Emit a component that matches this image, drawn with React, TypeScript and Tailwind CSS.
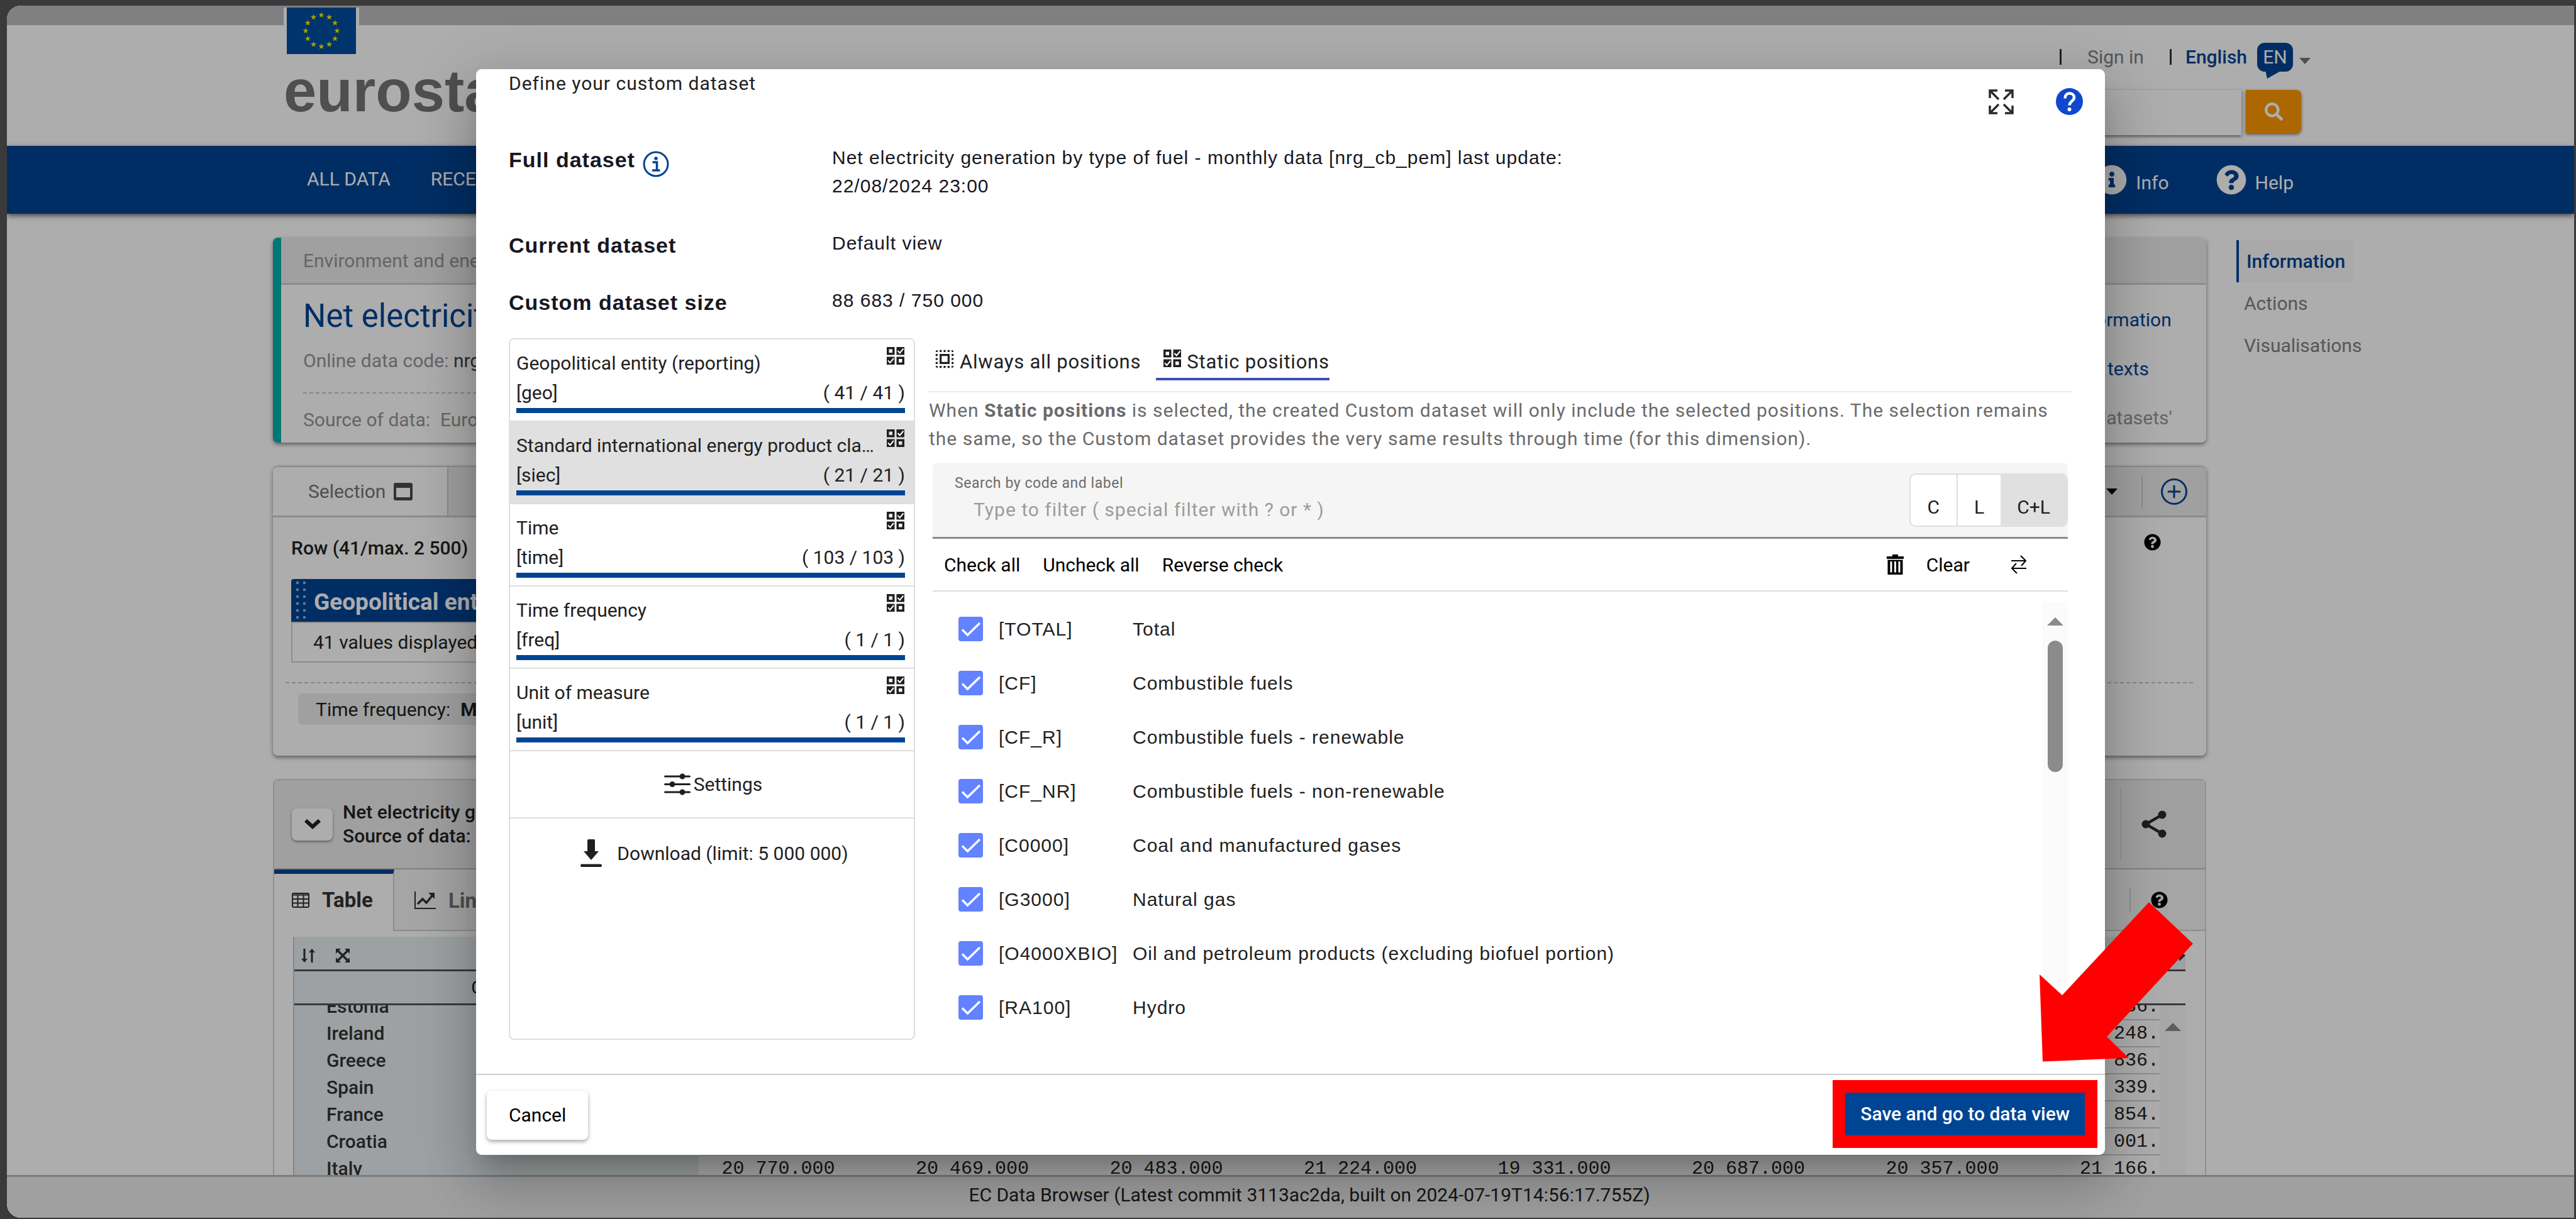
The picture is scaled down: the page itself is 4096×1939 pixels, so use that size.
import React from "react";
import { FaSearch, FaQuestionCircle, FaInfoCircle } from "react-icons/fa";
import { MdSelectAll } from "react-icons/md";

type Dimension = { label: string; code: string; count: string; selected?: boolean };

const dimensions: Dimension[] = [
  { label: "Geopolitical entity (reporting)", code: "[geo]", count: "( 41 / 41 )" },
  { label: "Standard international energy product classification (SIEC)", code: "[siec]", count: "( 21 / 21 )", selected: true },
  { label: "Time", code: "[time]", count: "( 103 / 103 )" },
  { label: "Time frequency", code: "[freq]", count: "( 1 / 1 )" },
  { label: "Unit of measure", code: "[unit]", count: "( 1 / 1 )" },
];

const positions = [
  ["[TOTAL]", "Total"],
  ["[CF]", "Combustible fuels"],
  ["[CF_R]", "Combustible fuels - renewable"],
  ["[CF_NR]", "Combustible fuels - non-renewable"],
  ["[C0000]", "Coal and manufactured gases"],
  ["[G3000]", "Natural gas"],
  ["[O4000XBIO]", "Oil and petroleum products (excluding biofuel portion)"],
  ["[RA100]", "Hydro"],
];

const tableRows: { name: string; values: string[] }[] = [
  { name: "Estonia", values: ["", "", "", "", "", "", "", "436.400"] },
  { name: "Ireland", values: ["", "", "", "", "", "", "", "2 248.100"] },
  { name: "Greece", values: ["", "", "", "", "", "", "", "3 836.100"] },
  { name: "Spain", values: ["", "", "", "", "", "", "", "20 339.100"] },
  { name: "France", values: ["", "", "", "", "", "", "", "42 854.400"] },
  { name: "Croatia", values: ["", "", "", "", "", "", "", "1 001.100"] },
  {
    name: "Italy",
    values: ["20 770.000", "20 469.000", "20 483.000", "21 224.000", "19 331.000", "20 687.000", "20 357.000", "21 166.000"],
  },
];

function CheckGridIcon({ className }: { className: string }) {
  return (
    <svg viewBox="0 0 28 28" className={className} aria-hidden="true">
      <path fillRule="evenodd" fill="#1f1f1f" d="M0 0h12.500v12.500H0zM3.500 3.500v5.500h5.500V3.500z" />
      <path fill="#1f1f1f" d="M15.500 0H28v12.500H15.500z" />
      <path fill="none" stroke="#fff" strokeWidth="2" d="M17.500 6l3.300 3.500 5.700-7" />
      <path fill="#1f1f1f" d="M0 15.500h12.500V28H0z" />
      <path fill="none" stroke="#fff" strokeWidth="2" d="M2 21.500l3.300 3.500 5.700-7" />
      <path fillRule="evenodd" fill="#1f1f1f" d="M15.500 15.500H28V28H15.500zM19 19v5.500h5.500V19z" />
    </svg>
  );
}

function EuropeFlag() {
  const stars = Array.from({ length: 12 }, (_, i) => {
    const a = (i * Math.PI) / 6;
    return { x: 55 + 25 * Math.sin(a), y: 37 - 25 * Math.cos(a) };
  });
  return (
    <svg viewBox="0 0 110 74" className="h-[74px] w-[110px]" aria-label="European Union flag">
      <rect width="110" height="74" fill="#004d9f" />
      {stars.map((s, i) => (
        <path
          key={i}
          transform={`translate(${s.x} ${s.y}) scale(5)`}
          fill="#fff000"
          d="M0-1l.225.690h.726l-.587.427.224.691L0 .382l-.588.426.224-.691-.587-.427h.726z"
        />
      ))}
    </svg>
  );
}

function SiteHeader() {
  return (
    <>
      <div className="h-[31px] bg-[#bdbdc0]" />
      <header className="flex h-48 justify-between bg-white pr-[419px] pl-[440px]">
        <div className="-mt-7">
          <div className="w-[120px] bg-white px-[5px]">
            <EuropeFlag />
          </div>
          <div className="mt-3 font-['Liberation_Sans',sans-serif] text-[94px] leading-none font-bold text-[#757575]">eurostat</div>
        </div>
        <div className="flex flex-col items-end pt-7">
          <div className="flex h-[45px] items-center leading-[45px]">
            <span className="h-[25px] w-[3px] bg-[#333]" />
            <a href="#signin" className="mx-[41px] text-[#808080]">Sign in</a>
            <span className="h-[25px] w-[3px] bg-[#333]" />
            <a href="#language" className="ml-[22px] flex items-center font-medium text-[#004494]">
              English
              <span className="relative ml-4 flex h-[46px] w-[57px] items-center justify-center rounded-[12px] bg-[#004494] text-[30px] font-normal text-white">
                EN
                <svg viewBox="0 0 26 14" className="absolute top-[44px] left-[13px] h-[14px] w-[26px]" aria-hidden="true">
                  <path fill="#004494" d="M0 0h26L3 13z" />
                </svg>
              </span>
            </a>
            <svg viewBox="0 0 18 10" className="mt-3 ml-[10px] h-[10px] w-[18px]" aria-hidden="true">
              <path fill="#757575" d="M0 0h18l-9 10z" />
            </svg>
          </div>
          <div className="mt-[30px] mr-[15px] flex gap-[7px]">
            <input aria-label="Search" className="h-[72px] w-[800px] bg-white shadow-[0_2px_5px_rgba(0,0,0,0.55)]" />
            <button aria-label="Search" className="flex h-[69px] w-[88px] items-center justify-center rounded-r-[8px] bg-[#ff9800] text-white shadow-[0_2px_5px_rgba(0,0,0,0.5)]">
              <FaSearch className="size-[29px]" />
            </button>
          </div>
        </div>
      </header>
      <nav className="relative flex h-[108px] items-center justify-between bg-[#004494] pr-[446px] pl-[477px] text-white shadow-[0_3px_8px_rgba(0,0,0,0.6)]">
        <div className="flex gap-16 pb-1">
          <a href="#all">ALL DATA</a>
          <a href="#recent">RECENT DATA</a>
        </div>
        <div className="flex gap-[75px]">
          <a href="#info" className="flex items-center gap-[14px]">
            <FaInfoCircle className="size-[48px]" />
            <span className="pt-2">Info</span>
          </a>
          <a href="#help" className="flex items-center gap-[14px]">
            <FaQuestionCircle className="size-[48px]" />
            <span className="pt-2">Help</span>
          </a>
        </div>
      </nav>
    </>
  );
}

function DatasetCard() {
  return (
    <section className="h-[326px] overflow-hidden rounded-[8px] border-l-[13px] border-[#00b0a9] bg-white leading-[45px] text-[#959595] shadow-[0_3px_6px_rgba(0,0,0,0.45)]">
      <div className="flex h-[75px] items-center border-b-3 border-[#cfcfcf] bg-[#ececec] px-[35px]">Environment and energy</div>
      <div className="flex justify-between pl-[35px]">
        <div className="w-[2400px] pt-5">
          <h1 className="text-[51px] leading-[60px] text-[#004494]">Net electricity generation by type of fuel - monthly data</h1>
          <p className="mt-[18px]">
            Online data code: <span className="text-[#444]">nrg_cb_pem</span>
          </p>
          <div className="mt-7 border-t-2 border-dashed border-[#c4c4c4]" />
          <p className="mt-[19px] flex gap-4">
            Source of data: <span>Eurostat</span>
          </p>
        </div>
        <div className="flex w-[321px] flex-col gap-[33px] pt-[33px]">
          <a href="#dataset" className="text-[#004494]">Dataset information</a>
          <a href="#texts" className="text-[#004494]">Explanatory texts</a>
          <span>Download 'datasets'</span>
        </div>
      </div>
    </section>
  );
}

function SelectionCard() {
  return (
    <section className="h-[461px] overflow-hidden rounded-[8px] border-t-2 border-[#cfcfcf] bg-white shadow-[0_3px_6px_rgba(0,0,0,0.45)]">
      <div className="flex h-20 items-center justify-between border-b-3 border-[#cfcfcf] bg-[#ececec]">
        <button className="flex h-full w-[279px] items-center gap-[13px] border-r-2 border-[#cfcfcf] bg-white pl-[56px] text-[#757575]">
          Selection
          <svg viewBox="0 0 30 28" className="h-[28px] w-[30px]" aria-hidden="true">
            <path fill="#4a4a4a" fillRule="evenodd" d="M3 0h24a3 3 0 013 3v22a3 3 0 01-3 3H3a3 3 0 01-3-3V3a3 3 0 013-3zM4 8v15h22V8z" />
          </svg>
        </button>
        <div className="flex h-full items-center pr-[30px]">
          <svg viewBox="0 0 18 10" className="h-[10px] w-[18px]" aria-hidden="true">
            <path d="M0 0h18l-9 10z" />
          </svg>
          <span className="mr-[29px] ml-[38px] h-[52px] w-[2px] bg-[#cfcfcf]" />
          <svg viewBox="0 0 42 42" className="size-[42px]" fill="none" stroke="#004494" strokeWidth="3" strokeLinecap="round" aria-hidden="true">
            <circle cx="21" cy="21" r="19.500" />
            <path d="M21 12v18M12 21h18" />
          </svg>
        </div>
      </div>
      <div className="flex h-[77px] items-start justify-between pt-[26px] pr-[72px] pl-[29px]">
        <span className="font-medium">Row (41/max. 2 500)</span>
        <FaQuestionCircle className="size-[27px] text-black" />
      </div>
      <div className="mt-[21px] ml-[29px] w-[900px]">
        <div className="flex h-[68px] items-center rounded-t-[4px] bg-[#004494] pl-2 text-[37px] font-bold text-white">
          <svg viewBox="0 0 16 60" className="mr-3 h-[60px] w-[16px]" fill="#8fb0d8" aria-hidden="true">
            {[0, 1, 2, 3, 4, 5].map((r) => (
              <path key={r} d={`M0 ${r * 11}h4v4h-4zM11 ${r * 11}h4v4h-4z`} />
            ))}
          </svg>
          <span className="pt-1">Geopolitical entity (reporting)</span>
        </div>
        <div className="flex h-[65px] items-center border-2 border-[#cfcfcf] pl-[33px]">41 values displayed</div>
      </div>
      <div className="mt-[31px] mr-[21px] ml-5 border-t-2 border-dashed border-[#c4c4c4]" />
      <div className="mt-4 ml-10 flex h-[50px] w-[420px] items-center gap-4 rounded-[6px] bg-[#ececec] pl-7">
        Time frequency: <b>Monthly</b>
      </div>
    </section>
  );
}

function TableCard() {
  return (
    <section className="flex min-h-0 flex-1 flex-col rounded-t-[8px] border-2 border-b-0 border-[#d4d4d4] bg-white">
      <div className="flex h-[142px] shrink-0 items-center justify-between border-b-2 border-[#bdbdbd] bg-[#ececec] pr-[61px] pl-7">
        <div className="flex items-center gap-4">
          <button aria-label="Collapse" className="flex h-[51px] w-[65px] items-center justify-center rounded-[8px] bg-white shadow-[0_2px_4px_rgba(0,0,0,0.4)]">
            <svg viewBox="0 0 26 16" className="h-[16px] w-[26px]" fill="none" stroke="#222" strokeWidth="6" aria-hidden="true">
              <path d="M2 2l11 10L24 2" />
            </svg>
          </button>
          <p className="leading-[38px] font-medium">
            Net electricity generation by type of fuel
            <br />
            Source of data: Eurostat
          </p>
        </div>
        <div className="flex items-center">
          <span className="mr-8 h-[112px] w-[2px] bg-[#d9d9d9]" />
          <svg viewBox="0 0 40 44" className="h-[44px] w-[40px]" fill="#2b2b2b" aria-hidden="true">
            <path fill="none" stroke="#2b2b2b" strokeWidth="4.500" d="M33 7L7 22l26 15" />
            <circle cx="7" cy="22" r="6.500" />
            <circle cx="33" cy="7" r="6.500" />
            <circle cx="33" cy="37" r="6.500" />
          </svg>
        </div>
      </div>
      <div className="flex h-[98px] shrink-0 items-stretch bg-[#f3f3f3]">
        <button className="flex w-[191px] items-center gap-5 border-t-7 border-r-2 border-t-[#004494] border-r-[#cfcfcf] bg-white pb-2 pl-[28px] text-[33px] font-bold text-[#333]">
          <svg viewBox="0 0 28 24" className="h-[24px] w-[28px]" fill="none" stroke="#333" strokeWidth="2" aria-hidden="true">
            <rect x="1" y="1" width="26" height="22" rx="2" />
            <path d="M1 3.500h26M1 10h26M1 16.500h26M9.500 3v20M18.500 3v20" />
          </svg>
          Table
        </button>
        <div className="flex flex-1 items-center justify-between border-b-2 border-[#cfcfcf] pr-[59px] pl-8">
          <button className="flex items-center gap-5 pt-[2px] text-[33px] font-bold text-[#757575]">
            <svg viewBox="0 0 34 28" className="h-[28px] w-[34px]" fill="none" stroke="#333" aria-hidden="true">
              <path strokeWidth="2" d="M1 0v27h33" />
              <path strokeWidth="3.500" d="M5 20l8-8 6 6L28 7" />
              <path fill="#333" stroke="none" d="M22 2h10v10z" />
            </svg>
            Line
          </button>
          <div className="flex items-center">
            <span className="mr-8 h-[38px] w-[2px] bg-[#cfcfcf]" />
            <FaQuestionCircle className="size-[27px] text-black" />
          </div>
        </div>
      </div>
      <div className="mt-[9px] mr-[31px] ml-[30px] flex min-h-0 flex-1 flex-col border-l-2 border-[#c4c4c4]">
        <div className="flex h-[55px] shrink-0 items-center justify-between border-b-3 border-[#555] bg-[#e8eef0] pt-[7px] pl-[11px]">
          <div className="flex items-center gap-[33px]">
            <svg viewBox="0 0 22 22" className="size-[22px]" fill="#333" aria-hidden="true">
              <path d="M3.500 0h3v16H10l-5 6-5-6h3.500zM15.500 22h3V6H22l-5-6-5 6h3.500z" />
            </svg>
            <svg viewBox="0 0 22 22" className="size-[22px]" fill="#333" aria-hidden="true">
              <path d="M0 0h8L0 8zM22 0v8l-8-8zM0 22v-8l8 8zM22 22h-8l8-8z" />
              <path fill="none" stroke="#333" strokeWidth="3.500" d="M3 3l16 16M19 3L3 19" />
            </svg>
          </div>
          <svg viewBox="0 0 22 22" className="size-[22px]" fill="#333" aria-hidden="true">
            <path d="M0 8h12V2l10 9-10 9v-6H0z" />
          </svg>
        </div>
        <div className="flex h-[54px] shrink-0 border-b-3 border-[#555] bg-white">
          <div className="flex w-[643px] items-center bg-[#e8eef0] pl-[281px]">GEO (Labels)</div>
        </div>
        <div className="flex min-h-0 flex-1">
          <div className="min-w-0 flex-1 overflow-hidden">
            <table className="-mt-5 w-[3111px] table-fixed border-collapse">
              <tbody>
                {tableRows.map((row) => (
                  <tr key={row.name} className="h-[43px]">
                    <th scope="row" className="w-[643px] bg-[#e8eef0] p-0 pl-[51px] text-left leading-[42px] font-medium text-[#333]">
                      {row.name}
                    </th>
                    {row.values.map((v, i) => (
                      <td
                        key={i}
                        className="border-b-2 border-[#cfcfcf] p-0 pt-[2px] pr-[92px] text-right font-['Liberation_Mono',monospace] leading-[39px] whitespace-nowrap text-[#222]"
                      >
                        {v}
                      </td>
                    ))}
                  </tr>
                ))}
              </tbody>
            </table>
          </div>
          <div className="flex w-[41px] justify-center bg-[#f8f8f8] pt-[28px]">
            <svg viewBox="0 0 26 13" className="h-[13px] w-[26px]" aria-hidden="true">
              <path fill="#8b8b8b" d="M0 13L13 0l13 13z" />
            </svg>
          </div>
        </div>
      </div>
    </section>
  );
}

function DimensionList() {
  return (
    <div className="w-[646px] shrink-0 overflow-hidden rounded-[8px] border-2 border-[#dedede]">
      {dimensions.map((d) => (
        <button
          key={d.code}
          className={
            d.selected
              ? "relative block w-full border-b-2 border-[#dedede] bg-[#e0e0e0] pt-[14px] pr-[14px] pb-3 pl-[10px] text-left leading-[47px]"
              : "relative block w-full border-b-2 border-[#dedede] bg-white pt-[14px] pr-[14px] pb-3 pl-[10px] text-left leading-[47px]"
          }
        >
          <span className="block truncate pr-10">{d.label}</span>
          <span className="flex justify-between">
            <span>{d.code}</span>
            <span>{d.count}</span>
          </span>
          <span className="mt-px block h-2 bg-[#004494]" />
          <CheckGridIcon className="absolute top-3 right-[15px] size-[28px]" />
        </button>
      ))}
      <button className="flex h-[107px] w-full items-center justify-center gap-[5px] border-b-2 border-[#dedede] pl-1">
        <svg viewBox="0 0 42 35" className="h-[35px] w-[42px]" stroke="#1f1f1f" strokeWidth="3" strokeLinecap="round" fill="#1f1f1f" aria-hidden="true">
          <path d="M1.500 5h39M1.500 17.500h39M1.500 30h39" />
          <circle cx="29" cy="5" r="3" />
          <circle cx="13" cy="17.500" r="3" />
          <circle cx="29" cy="30" r="3" />
        </svg>
        Settings
      </button>
      <button className="flex h-[110px] w-full items-center justify-center gap-6 pl-2">
        <svg viewBox="0 0 34 44" className="h-[44px] w-[34px]" fill="#1f1f1f" aria-hidden="true">
          <path d="M13 0h8a2 2 0 012 2v17h6L17 33 5 19h6V2a2 2 0 012-2z" />
          <rect y="39.500" width="34" height="4.500" rx="2" />
        </svg>
        Download (limit: 5 000 000)
      </button>
    </div>
  );
}

function PositionsPane() {
  return (
    <div className="flex min-w-0 flex-1 flex-col">
      <div className="flex gap-6 border-b-2 border-[#ebebeb] pb-[17px] pl-[10px] text-[31px] leading-[45px] tracking-wide" role="tablist">
        <button role="tab" className="flex gap-[9px] border-b-4 border-transparent pt-[15px] pb-[3px]">
          <MdSelectAll className="-mx-[4px] -mt-px size-[38px] text-[#1f1f1f]" />
          Always all positions
        </button>
        <button role="tab" aria-selected="true" className="flex gap-[9px] border-b-4 border-[#3f51b5] pt-[15px] pb-[3px] pl-3">
          <CheckGridIcon className="mt-[3px] size-[28px]" />
          Static positions
        </button>
      </div>
      <p className="mt-[6px] leading-[45px] tracking-[1px] text-[#6b6b6b]">
        When <b>Static positions</b> is selected, the created Custom dataset will only include the selected positions. The selection remains the same, so
        the Custom dataset provides the very same results through time (for this dimension).
      </p>
      <div className="mr-[7px] ml-[6px] flex min-h-0 flex-1 flex-col">
        <div className="mt-4 flex h-[121px] items-start justify-between rounded-t-[8px] border-b-3 border-[#8a8a8a] bg-[#f5f5f5]">
          <div className="flex flex-1 flex-col pt-[19px]">
            <label htmlFor="filter" className="pl-[35px] text-[23px] leading-7 tracking-wide text-[#6b6b6b]">
              Search by code and label
            </label>
            <input
              id="filter"
              placeholder="Type to filter ( special filter with ? or * )"
              className="mt-[5px] h-[45px] bg-transparent pl-[65px] tracking-[1px] outline-none placeholder:text-[#9c9c9c]"
            />
          </div>
          <div className="mt-[17px] flex h-[85px] overflow-hidden rounded-[10px] border-2 border-[#dedede] bg-white">
            <button className="border-r-2 border-[#dedede] px-[27px] pt-[22px]">C</button>
            <button className="px-[26px] pt-[22px]">L</button>
            <button className="bg-[#e0e0e0] px-[26px] pt-[22px]">C+L</button>
          </div>
        </div>
        <div className="flex h-[84px] items-center border-b-2 border-[#dedede] pr-[66px] pl-[18px] text-black">
          <div className="flex flex-1 gap-9">
            <button>Check all</button>
            <button>Uncheck all</button>
            <button>Reverse check</button>
          </div>
          <button className="flex items-center gap-9">
            <svg viewBox="0 0 27 32" className="h-[32px] w-[27px]" aria-hidden="true">
              <path fillRule="evenodd" d="M9 0h9v3h9v4H0V3h9zM1.500 8.500h24V32h-24zM5.500 11v17.500h3V11zM12 11v17.500h3V11zM18.500 11v17.500h3V11z" />
            </svg>
            Clear
          </button>
          <button aria-label="Swap selection" className="ml-[66px]">
            <svg viewBox="0 0 24 30" className="h-[30px] w-[24px]" fill="none" stroke="#000" strokeWidth="2" aria-hidden="true">
              <path d="M0 9h23M15 1l8 8-7 8M24 21H1M9 29l-8-8 7-8" />
            </svg>
          </button>
        </div>
        <div className="mt-4 flex min-h-0 flex-1">
          <ul className="flex flex-1 flex-col justify-between pb-2 font-['Liberation_Sans',sans-serif] tracking-[1px]">
            {positions.map(([code, label]) => (
              <li key={code}>
                <label className="flex h-[86px] items-center pl-[41px]">
                  <span className="relative mr-[25px] size-[39px] shrink-0">
                    <input type="checkbox" defaultChecked className="block size-[39px] appearance-none rounded-[4px] bg-[#6282ff]" />
                    <svg viewBox="0 0 39 39" className="pointer-events-none absolute inset-0 size-[39px]" fill="none" stroke="#fff" strokeWidth="3.500" aria-hidden="true">
                      <path d="M6 20.500l8.500 8.500L34 10" />
                    </svg>
                  </span>
                  <span className="w-[213px] shrink-0">{code}</span>
                  <span>{label}</span>
                </label>
              </li>
            ))}
          </ul>
          <div className="flex w-10 flex-col items-center bg-[#fbfbfb] pt-[25px]">
            <svg viewBox="0 0 26 13" className="h-[13px] w-[26px]" aria-hidden="true">
              <path fill="#8b8b8b" d="M0 13L13 0l13 13z" />
            </svg>
            <div className="mt-6 h-[209px] w-6 rounded-full bg-[#8b8b8b]" />
          </div>
        </div>
      </div>
    </div>
  );
}

function CustomDatasetDialog() {
  return (
    <div
      role="dialog"
      aria-label="Define your custom dataset"
      className="relative flex h-full w-full max-w-[2590px] flex-col rounded-[9px] bg-white text-[#212121] shadow-[0_23px_32px_-15px_rgba(0,0,0,0.2),0_50px_80px_6px_rgba(0,0,0,0.14),0_19px_97px_17px_rgba(0,0,0,0.12)]"
    >
      <div className="flex min-h-0 flex-1 flex-col px-[52px] pb-[54px]">
        <div className="flex items-start justify-between">
          <h2 className="leading-[46px] tracking-[1px]">Define your custom dataset</h2>
          <div className="-mr-[17px] flex items-center gap-[67px] pt-[30px]">
            <button aria-label="Full screen">
              <svg viewBox="0 0 40 40" className="size-[40px]" fill="none" stroke="#2b2b2b" strokeWidth="3.500" aria-hidden="true">
                <path d="M2 14V2h12M2 2l14 14M26 2h12v12M38 2L24 16M2 26v12h12M2 38l14-14M38 26v12H26M38 38L24 24" />
              </svg>
            </button>
            <button aria-label="Help">
              <svg viewBox="0 0 43 43" className="size-[43px]" fill="none" aria-hidden="true">
                <circle cx="21.500" cy="21.500" r="21.500" fill="#1047cf" />
                <path stroke="#fff" strokeWidth="4.500" d="M14.500 16.500c0-5 3-8 7.200-8s7.300 2.700 7.300 6.700c0 5.300-7.500 6.300-7.500 12.300" />
                <circle cx="21.500" cy="34" r="3" fill="#fff" />
              </svg>
            </button>
          </div>
        </div>
        <dl className="mt-[45px] grid grid-cols-[514px_1200px] gap-y-[46px] font-['Liberation_Sans',sans-serif] leading-[45px] tracking-[1px] text-[#17171f]">
          <dt className="-mb-1 flex items-start gap-3 pt-1 text-[34px] font-bold">
            Full dataset
            <svg viewBox="0 0 42 42" className="mt-2 size-[42px]" fill="none" stroke="#004494" aria-hidden="true">
              <circle cx="21" cy="21" r="19" strokeWidth="3" />
              <path strokeWidth="3.500" d="M15.500 18h7v12.500M15 31h12.500" />
              <circle cx="21" cy="12" r="2.800" fill="#004494" stroke="none" />
            </svg>
          </dt>
          <dd>
            Net electricity generation by type of fuel - monthly data [nrg_cb_pem] last update:
            <br />
            22/08/2024 23:00
          </dd>
          <dt className="-mb-1 pt-1 text-[34px] font-bold">Current dataset</dt>
          <dd>Default view</dd>
          <dt className="-mb-1 pt-1 text-[34px] font-bold">Custom dataset size</dt>
          <dd>88 683 / 750 000</dd>
        </dl>
        <div className="mt-[38px] flex min-h-0 flex-1 gap-[22px]">
          <DimensionList />
          <PositionsPane />
        </div>
      </div>
      <div className="flex h-[129px] items-center justify-between border-t-2 border-[#cfcfcf] pr-3 pl-[17px]">
        <button className="h-[78px] rounded-[8px] bg-white px-[35px] text-black shadow-[0_3px_6px_rgba(0,0,0,0.35)]">Cancel</button>
        <div className="mb-1 bg-[#ff0000] p-5">
          <button className="h-[68px] bg-[#004494] px-6 font-medium text-white">Save and go to data view</button>
        </div>
      </div>
      <svg viewBox="0 0 245 254" className="pointer-events-none absolute right-[-141px] bottom-[148px] h-[254px] w-[245px]" aria-hidden="true">
        <path fill="#ff0000" d="M174 0l70 66-137 148 35 34-137 5.500L0 115l36 33z" />
      </svg>
    </div>
  );
}

export default function App() {
  return (
    <div className="h-screen bg-[#3a3a3a] pt-[9px] pr-[3px] pb-[2px] pl-[11px] font-['Roboto',sans-serif] text-[30px] leading-[45px] text-[#222]">
      <div className="relative flex h-full flex-col overflow-hidden rounded-l-[22px] bg-white">
        <SiteHeader />
        <div className="flex min-h-0 flex-1 pt-[38px] pl-[423px]">
          <main className="flex min-w-0 flex-1 flex-col gap-[37px]">
            <DatasetCard />
            <SelectionCard />
            <TableCard />
          </main>
          <aside className="ml-12 w-[537px] shrink-0 pt-1 text-[#808080]">
            <a href="#information" className="flex h-[67px] w-[186px] items-center border-l-4 border-[#004494] bg-[#fafafa] pl-3 font-medium text-[#004494]">
              Information
            </a>
            <a href="#actions" className="flex h-[67px] items-center pl-3">Actions</a>
            <a href="#visualisations" className="flex h-[67px] items-center pl-3">Visualisations</a>
          </aside>
        </div>
        <footer className="flex h-[68px] shrink-0 items-center justify-center border-t-3 border-[#b5b5b5] bg-[#ececec] pb-2 pl-[60px]">
          EC Data Browser (Latest commit 3113ac2da, built on 2024-07-19T14:56:17.755Z)
        </footer>
        <div className="absolute inset-0 flex justify-center bg-black/32 pt-[101px] pb-[100px]">
          <CustomDatasetDialog />
        </div>
      </div>
    </div>
  );
}
